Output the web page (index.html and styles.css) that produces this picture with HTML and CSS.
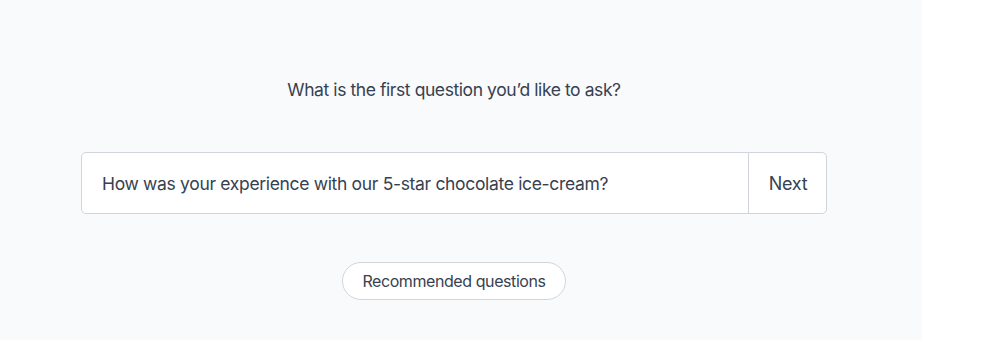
FILE: index.html
```html
<!DOCTYPE html>
<html>
<head>
<meta charset="utf-8">
<link rel="stylesheet" href="styles.css">
</head>
<body>
<div class="panel">
  <div class="content">
    <h2 class="title">What is the first question you’d like to ask?</h2>
    <div class="field">
      <div class="field-text">How was your experience with our 5-star chocolate ice-cream?</div>
      <button class="next">Next</button>
    </div>
    <button class="recommend">Recommended questions</button>
  </div>
</div>
</body>
</html>
```
FILE: styles.css
```css
html, body {
  margin: 0;
  padding: 0;
  background: #ffffff;
}
body {
  font-family: Inter, "Noto Sans", sans-serif;
  color: #374151;
}
.panel {
  width: 922px;
  height: 340px;
  background: #f9fafb;
  box-sizing: border-box;
  padding-top: 78px;
}
.content {
  margin-left: 81px;
  width: 746px;
  display: flex;
  flex-direction: column;
  align-items: center;
}
.title {
  margin: 0;
  font-size: 17.5px;
  font-weight: 400;
  line-height: 24px;
  letter-spacing: -0.42px;
}
.field {
  margin-top: 50px;
  width: 100%;
  height: 62px;
  box-sizing: border-box;
  border: 1px solid #d1d5db;
  border-radius: 5px;
  background: #fff;
  display: flex;
  align-items: stretch;
}
.field-text {
  flex: 1;
  display: flex;
  align-items: center;
  padding-left: 20px;
  font-size: 17.5px;
  letter-spacing: -0.33px;
}
.next {
  width: 78px;
  border: none;
  border-left: 1px solid #d1d5db;
  background: transparent;
  font-family: inherit;
  font-size: 18px;
  color: #374151;
  letter-spacing: -0.3px;
  padding: 0 0 0 1px;
}
.recommend {
  margin-top: 48px;
  width: 224px;
  height: 38px;
  border: 1px solid #d1d5db;
  border-radius: 19px;
  background: #fff;
  font-family: inherit;
  font-size: 16px;
  color: #374151;
  letter-spacing: -0.42px;
  padding: 0;
}
```
